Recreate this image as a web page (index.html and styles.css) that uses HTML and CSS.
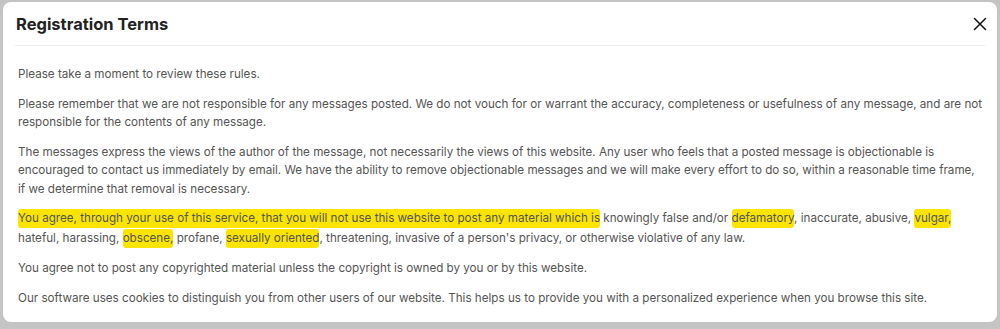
FILE: index.html
```html
<!DOCTYPE html>
<html lang="en">

<head>
    <meta charset="UTF-8">
    <title>Registration Terms</title>
    <link rel="stylesheet" href="styles.css">
</head>

<body>
    <div class="modal">
        <div class="modal-header">
            <h1>Registration Terms</h1>
            <button class="close" aria-label="Close">
                <svg width="14" height="14" viewBox="0 0 14 14">
                    <path d="M1.5 1.5L12.5 12.5M12.5 1.5L1.5 12.5" stroke="#111" stroke-width="1.5" stroke-linecap="round" />
                </svg>
            </button>
        </div>

        <div class="modal-body">
            <p>Please take a moment to review these rules.</p>
            <p>Please remember that we are not responsible for any messages posted. We do not vouch for or warrant the accuracy, completeness or usefulness of any message, and are not responsible for the contents of any message.</p>
            <p>The messages express the views of the author of the message, not necessarily the views of this website. Any user who feels that a posted message is objectionable is encouraged to contact us immediately by email. We have the ability to remove objectionable messages and we will make every effort to do so, within a reasonable time frame, if we determine that removal is necessary.</p>
            <p class="marked"><mark>You agree, through your use of this service, that you will not use this website to post any material which is</mark> knowingly false and/or <mark>defamatory</mark>, inaccurate, abusive, <mark>vulgar,</mark> hateful, harassing, <mark>obscene,</mark> profane, <mark>sexually oriented</mark>, threatening, invasive of a person's privacy, or otherwise violative of any law.</p>
            <p>You agree not to post any copyrighted material unless the copyright is owned by you or by this website.</p>
            <p>Our software uses cookies to distinguish you from other users of our website. This helps us to provide you with a personalized experience when you browse this site.</p>
        </div>
    </div>
</body>

</html>
```

FILE: styles.css
```css
body {
    margin: 0;
    background-color: #c4c4c4;
    font-family: Inter, "Noto Sans", sans-serif;
}

.modal {
    margin: 2px 3px 7px 3px;
    background-color: white;
    border-radius: 8px;
    height: 320px;
    box-sizing: border-box;
}

.modal-header {
    display: flex;
    justify-content: space-between;
    align-items: center;
    margin: 0 12px;
    height: 43px;
    border-bottom: 1px solid #ececec;
}

.modal-header h1 {
    margin: 0 0 0 1px;
    font-size: 16.5px;
    font-weight: 700;
    color: #222;
}

.close {
    border: none;
    background: none;
    padding: 0;
    margin-right: -2px;
    display: flex;
}

.modal-body {
    padding: 19px 13px 0 15px;
    color: #555;
    font-size: 11.65px;
    line-height: 18.5px;
}

.modal-body p {
    margin: 0 0 11px 0;
}

.marked {
    line-height: 19.5px;
}

mark {
    background-color: #fbe500;
    color: #555;
    border-radius: 3px;
    padding: 2px 0 3px 0;
}
```
